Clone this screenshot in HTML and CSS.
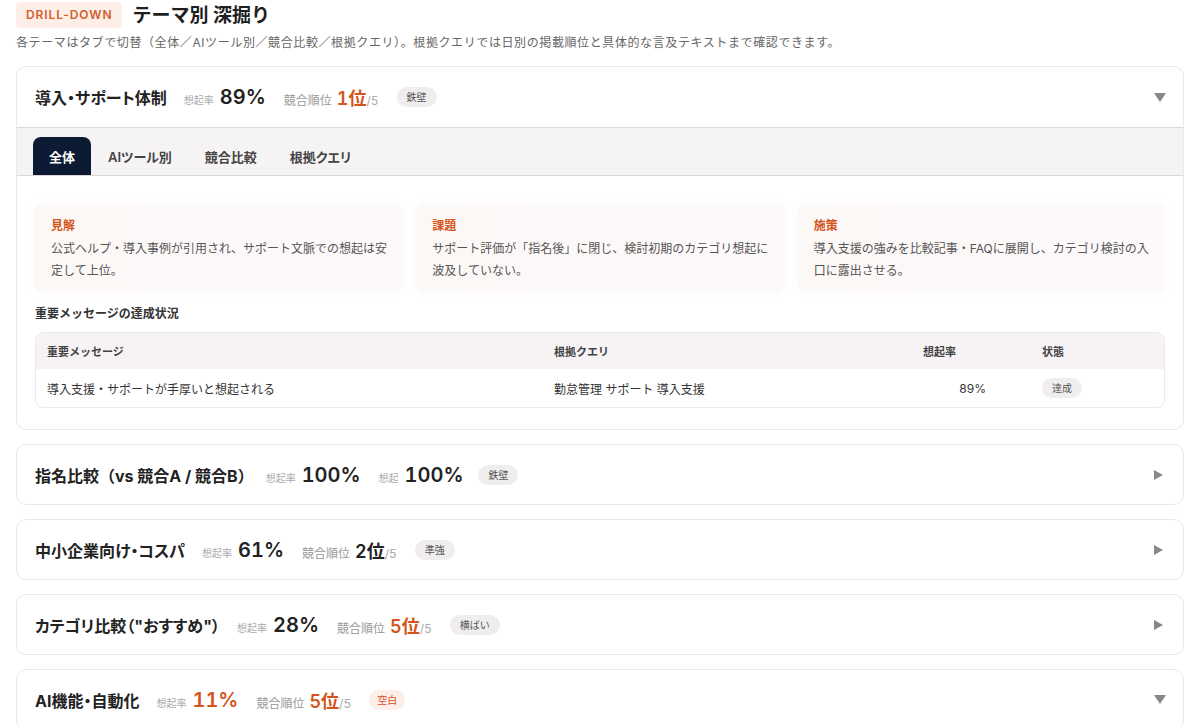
FILE: index.html
```html
<!DOCTYPE html>
<html lang="ja">

<head>
    <meta charset="UTF-8">
    <meta name="viewport" content="width=device-width, initial-scale=1.0">
    <title>テーマ別 深掘り</title>
    <link rel="stylesheet" href="styles.css">
</head>

<body>
    <div class="section-head">
        <span class="eyebrow">DRILL-DOWN</span>
        <h2>テーマ別 深掘り</h2>
    </div>
    <p class="lead">各テーマはタブで切替（全体／AIツール別／競合比較／根拠クエリ）。根拠クエリでは日別の掲載順位と具体的な言及テキストまで確認できます。</p>

    <div class="themes">

        <div class="theme open">
            <div class="theme-head">
                <span class="theme-title">導入・サポート体制</span>
                <span class="metric"><span class="m-label">想起率</span><span class="m-big">89%</span></span>
                <span class="metric"><span class="m-label rank">競合順位</span><span class="m-rank hot">1位</span><span class="m-of">/5</span></span>
                <span class="pill">鉄壁</span>
                <span class="caret down"></span>
            </div>

            <div class="tabs">
                <span class="tab active">全体</span>
                <span class="tab">AIツール別</span>
                <span class="tab">競合比較</span>
                <span class="tab">根拠クエリ</span>
            </div>

            <div class="panel">
                <div class="insights">
                    <div class="insight">
                        <div class="insight-label">見解</div>
                        <p>公式ヘルプ・導入事例が引用され、サポート文脈での想起は安定して上位。</p>
                    </div>
                    <div class="insight">
                        <div class="insight-label">課題</div>
                        <p>サポート評価が「指名後」に閉じ、検討初期のカテゴリ想起に波及していない。</p>
                    </div>
                    <div class="insight">
                        <div class="insight-label">施策</div>
                        <p>導入支援の強みを比較記事・FAQに展開し、カテゴリ検討の入口に露出させる。</p>
                    </div>
                </div>

                <h4 class="sub-head">重要メッセージの達成状況</h4>
                <div class="msg-table">
                    <div class="msg-row thead">
                        <span>重要メッセージ</span>
                        <span>根拠クエリ</span>
                        <span>想起率</span>
                        <span>状態</span>
                    </div>
                    <div class="msg-row">
                        <span>導入支援・サポートが手厚いと想起される</span>
                        <span>勤怠管理 サポート 導入支援</span>
                        <span class="num">89%</span>
                        <span><span class="pill">達成</span></span>
                    </div>
                </div>
            </div>
        </div>

        <div class="theme">
            <div class="theme-head">
                <span class="theme-title plain">指名比較（vs 競合A / 競合B）</span>
                <span class="metric"><span class="m-label">想起率</span><span class="m-big">100%</span></span>
                <span class="metric tight"><span class="m-label">想起</span><span class="m-big">100%</span></span>
                <span class="pill">鉄壁</span>
                <span class="caret right"></span>
            </div>
        </div>

        <div class="theme">
            <div class="theme-head">
                <span class="theme-title">中小企業向け・コスパ</span>
                <span class="metric"><span class="m-label">想起率</span><span class="m-big">61%</span></span>
                <span class="metric"><span class="m-label rank">競合順位</span><span class="m-rank">2位</span><span class="m-of">/5</span></span>
                <span class="pill">準強</span>
                <span class="caret right"></span>
            </div>
        </div>

        <div class="theme">
            <div class="theme-head">
                <span class="theme-title">カテゴリ比較（"おすすめ"）</span>
                <span class="metric"><span class="m-label">想起率</span><span class="m-big">28%</span></span>
                <span class="metric"><span class="m-label rank">競合順位</span><span class="m-rank hot">5位</span><span class="m-of">/5</span></span>
                <span class="pill">横ばい</span>
                <span class="caret right"></span>
            </div>
        </div>

        <div class="theme">
            <div class="theme-head">
                <span class="theme-title">AI機能・自動化</span>
                <span class="metric"><span class="m-label">想起率</span><span class="m-big hot">11%</span></span>
                <span class="metric"><span class="m-label rank">競合順位</span><span class="m-rank hot">5位</span><span class="m-of">/5</span></span>
                <span class="pill warn">空白</span>
                <span class="caret down"></span>
            </div>
        </div>

    </div>
</body>

</html>
```

FILE: styles.css
```css
body {
    margin: 0;
    padding: 0 16px 40px;
    font-family: "Inter", "Noto Sans CJK JP", sans-serif;
    color: #222;
    background: #fff;
}

.section-head {
    display: flex;
    align-items: center;
    gap: 10px;
    padding-top: 2px;
}

.eyebrow {
    display: inline-block;
    padding: 5px 10px 6px;
    border-radius: 4px;
    background: #fdefe8;
    color: #d2602c;
    font-size: 12px;
    font-weight: 600;
    letter-spacing: 0.9px;
}

.section-head h2 {
    margin: -4px 0 0;
    font-size: 19px;
    font-weight: 700;
    color: #1f1f1f;
}

.lead {
    margin: 6px 0 14px;
    font-size: 12px;
    line-height: 18px;
    letter-spacing: 0.6px;
    color: #666;
}

.themes {
    display: flex;
    flex-direction: column;
    gap: 14px;
}

.theme {
    border: 1px solid #ebe8ea;
    border-radius: 10px;
    background: #fff;
    overflow: hidden;
}

.theme-head {
    display: flex;
    align-items: center;
    height: 59px;
    padding: 0 17px 0 18px;
}

.theme.open .theme-head {
    height: 60px;
    border-bottom: 1px solid #dedbdd;
}

.theme-title {
    font-size: 16px;
    font-weight: 700;
    color: #222;
    margin-right: 17px;
    font-feature-settings: "palt";
}

.theme-title.plain {
    font-feature-settings: normal;
    margin-right: 12px;
}

.metric {
    display: flex;
    align-items: baseline;
    margin-right: 18px;
    font-variant-numeric: tabular-nums;
}

.metric.tight {
    margin-right: 15px;
}

.m-label {
    font-size: 10px;
    color: #aaa;
    margin-right: 6px;
}

.m-label.rank {
    font-size: 12px;
    color: #999;
    margin-right: 5px;
}

.m-big {
    font-size: 20px;
    font-weight: 600;
    color: #222;
}

.m-rank {
    font-size: 18px;
    font-weight: 600;
    color: #222;
}

.hot {
    color: #d4541c;
}

.m-of {
    font-size: 12px;
    color: #aaa;
}

.pill {
    display: inline-block;
    padding: 3px 10px;
    border-radius: 10px;
    background: #f0edee;
    color: #555;
    font-size: 10px;
    line-height: 14px;
}

.pill.warn {
    padding: 3px 8px;
    background: #fdeee8;
    color: #d4541c;
}

.caret {
    margin-left: auto;
    width: 0;
    height: 0;
}

.caret.down {
    border-left: 6px solid transparent;
    border-right: 6px solid transparent;
    border-top: 9px solid #888;
}

.caret.right {
    margin-right: 3px;
    border-top: 5px solid transparent;
    border-bottom: 5px solid transparent;
    border-left: 9px solid #888;
}

.tabs {
    display: flex;
    align-items: flex-end;
    gap: 1px;
    height: 38px;
    padding: 9px 16px 0;
    background: #f6f3f5;
    border-bottom: 1px solid #d9d6d8;
}

.tab {
    display: flex;
    align-items: center;
    height: 38px;
    padding: 0 16px;
    font-size: 13px;
    font-weight: 600;
    color: #444;
    font-feature-settings: "palt";
}

.tab.active {
    background: #0d1a33;
    color: #fff;
    border-radius: 8px 8px 0 0;
}

.panel {
    padding: 28px 18px 21px;
}

.insights {
    display: grid;
    grid-template-columns: repeat(3, 1fr);
    gap: 14px;
}

.insight {
    padding: 13px 14px 10px 16px;
    border-radius: 6px;
    background: linear-gradient(90deg, #fcf8f6, #fdf8fa);
    box-shadow: 0 0 6px rgba(200, 170, 170, 0.07);
}

.insight-label {
    font-size: 12px;
    font-weight: 700;
    line-height: 18px;
    color: #d4541c;
    margin-bottom: 3px;
}

.insight p {
    margin: 0;
    font-size: 12px;
    line-height: 22px;
    color: #555;
}

.sub-head {
    margin: 13px 0 9px;
    font-size: 12px;
    line-height: 18px;
    font-weight: 700;
    color: #333;
}

.msg-table {
    border: 1px solid #ece9eb;
    border-radius: 8px;
    overflow: hidden;
}

.msg-row {
    display: grid;
    grid-template-columns: 507px 369px 119px 1fr;
    align-items: center;
    height: 38px;
    padding: 0 0 0 11px;
    font-size: 12px;
    color: #333;
}

.msg-row.thead {
    height: 36px;
    background: #f7f3f5;
    font-size: 11px;
    font-weight: 700;
    color: #444;
}

.msg-row .num {
    text-align: right;
    padding-right: 56px;
}
```
